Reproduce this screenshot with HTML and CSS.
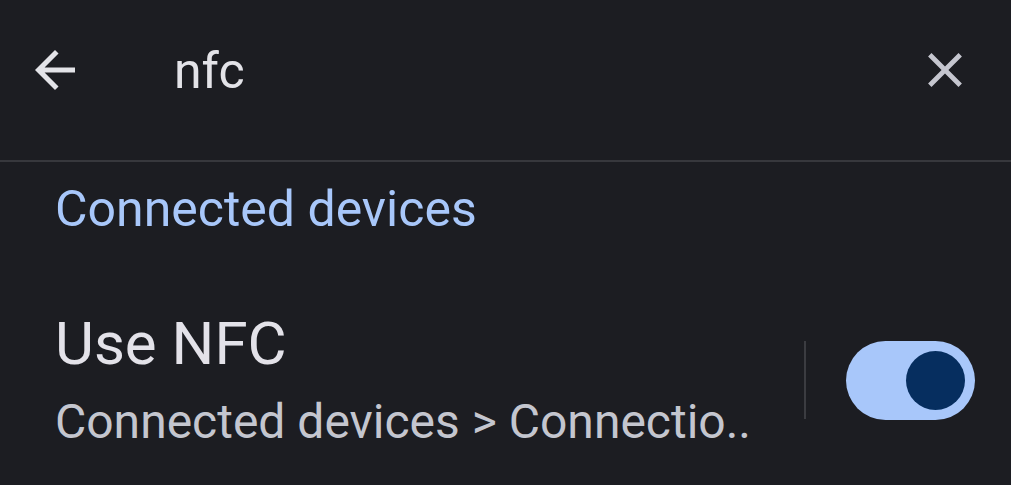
FILE: index.html
```html
<!DOCTYPE html>
<html lang="en">
<head>
    <meta charset="UTF-8">
    <meta name="viewport" content="width=device-width, initial-scale=1.0">
    <title>Search settings</title>
    <link rel="stylesheet" href="styles.css">
</head>
<body>

    <!-- Search bar -->
    <div class="search-bar">
        <svg class="icon back-icon" viewBox="0 0 24 24">
            <path d="M20 11H7.83l5.59-5.59L12 4l-8 8 8 8 1.41-1.41L7.83 13H20v-2z"/>
        </svg>
        <div class="query">nfc</div>
        <svg class="icon close-icon" viewBox="0 0 24 24">
            <path d="M19 6.41L17.59 5 12 10.59 6.41 5 5 6.41 10.59 12 5 17.59 6.41 19 12 13.41 17.59 19 19 17.59 13.41 12z"/>
        </svg>
    </div>

    <!-- Results -->
    <div class="results">
        <div class="section-title">Connected devices</div>
        <div class="result-row">
            <div class="result-text">
                <div class="result-title">Use NFC</div>
                <div class="result-summary">Connected devices &gt; Connectio..</div>
            </div>
            <div class="row-divider"></div>
            <div class="switch on">
                <div class="thumb"></div>
            </div>
        </div>
    </div>

</body>
</html>
```

FILE: styles.css
```css
body {
    font-family: Roboto, "Noto Sans", sans-serif;
    background-color: #1c1d22;
    margin: 0;
    height: 485px;
    overflow: hidden;
}
/* Search bar */
.search-bar {
    display: flex;
    align-items: center;
    height: 140px;
    padding: 0 37px 20px 25px;
    border-bottom: 2px solid #37383d;
}
.icon {
    flex-shrink: 0;
}
.back-icon {
    width: 60px;
    height: 60px;
    fill: #e3e3e8;
}
.close-icon {
    width: 58px;
    height: 58px;
    fill: #c5c6cf;
}
.query {
    flex-grow: 1;
    margin-left: 89px;
    font-size: 50px;
    color: #e3e3e8;
    padding-top: 2px;
}
/* Results */
.results {
    padding: 0 36px 0 55px;
}
.section-title {
    color: #a8c7fa;
    font-size: 50px;
    line-height: 60px;
    margin-top: 17px;
}
.result-row {
    display: flex;
    align-items: center;
    margin-top: 69px;
}
.result-text {
    flex-grow: 1;
}
.result-title {
    color: #e3e2e9;
    font-size: 60px;
    line-height: 72px;
}
.result-summary {
    color: #c4c6cf;
    font-size: 48px;
    line-height: 60px;
    margin-top: 12px;
}
.row-divider {
    width: 2px;
    height: 78px;
    background-color: #3b3c41;
    margin: 0 40px 0 0;
}
.switch {
    width: 129px;
    height: 79px;
    border-radius: 40px;
    background-color: #a8c7fa;
    display: flex;
    align-items: center;
    justify-content: flex-end;
    padding: 0 10px;
    box-sizing: border-box;
}
.thumb {
    width: 59px;
    height: 59px;
    border-radius: 50%;
    background-color: #062e5f;
}
```
